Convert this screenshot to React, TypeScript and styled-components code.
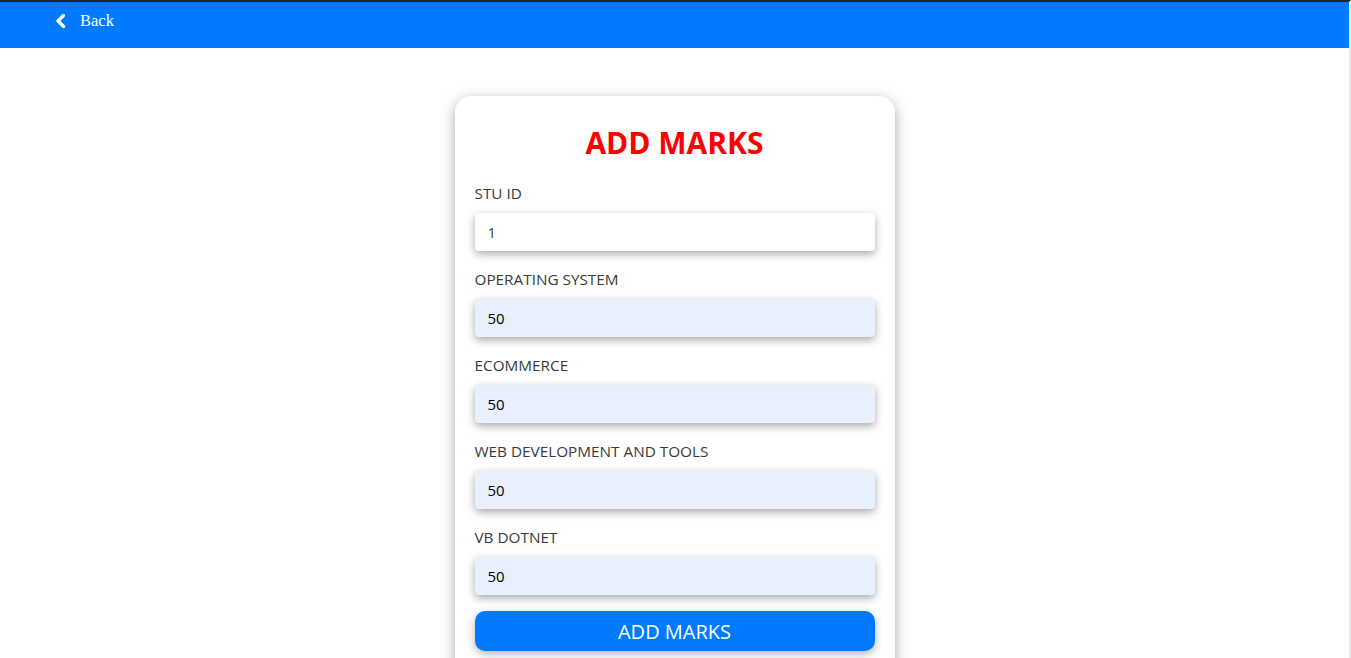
import React from "react";
import styled, { createGlobalStyle } from "styled-components";

const Global = createGlobalStyle`
  html, body { margin: 0; padding: 0; background: #fff; }
  body { font-family: "Open Sans", "Noto Sans", sans-serif; overflow: hidden; }
`;

const Page = styled.div`
  min-height: 658px;
  border-top: 2px solid #222;
  border-right: 2px solid #ececec;
  box-sizing: border-box;
`;

const Header = styled.header`
  height: 46px;
  background: #007bff;
  display: flex;
  align-items: center;
  padding-left: 55px;
`;

const BackLink = styled.a`
  display: flex;
  align-items: center;
  gap: 14px;
  color: #fff;
  font-family: "Liberation Serif", "Times New Roman", serif;
  font-size: 16.5px;
  text-decoration: none;
  margin-top: -9px;
`;

const Main = styled.main`
  display: flex;
  justify-content: center;
  padding-top: 48px;
`;

const Card = styled.form`
  width: 440px;
  box-sizing: border-box;
  background: #fff;
  border-radius: 16px;
  box-shadow: 0 4px 14px rgba(0, 0, 0, 0.35);
  padding: 27px 20px 30px;
  display: flex;
  flex-direction: column;
`;

const Title = styled.h1`
  margin: 0 0 20px;
  text-align: center;
  color: #f00;
  font-size: 30px;
  font-weight: 700;
  line-height: 40px;
`;

const Field = styled.div`
  display: flex;
  flex-direction: column;
  gap: 10px;
  margin-bottom: 18px;
`;

const Label = styled.label`
  font-size: 15.3px;
  font-weight: 400;
  color: #3a3a3a;
  line-height: 20px;
`;

const Input = styled.input<{ $filled?: boolean }>`
  height: 38px;
  box-sizing: border-box;
  border: none;
  border-radius: 4px;
  background: ${(p) => (p.$filled ? "#e8f0fe" : "#fff")};
  box-shadow: 0 3px 8px rgba(0, 0, 0, 0.35);
  padding: 0 13px;
  font-family: "Open Sans", "Noto Sans", sans-serif;
  font-size: 15px;
  color: ${(p) => (p.$filled ? "#000" : "#444")};
  outline: none;
`;

const Submit = styled.button`
  height: 40px;
  margin-top: -2px;
  border: none;
  border-radius: 10px;
  background: #007bff;
  color: #fff;
  font-family: "Open Sans", "Noto Sans", sans-serif;
  font-size: 20px;
  box-shadow: 0 3px 8px rgba(0, 0, 0, 0.3);
`;

const fields = [
  { label: "STU ID", value: "1", filled: false },
  { label: "OPERATING SYSTEM", value: "50", filled: true },
  { label: "ECOMMERCE", value: "50", filled: true },
  { label: "WEB DEVELOPMENT AND TOOLS", value: "50", filled: true },
  { label: "VB DOTNET", value: "50", filled: true },
];

export default function App() {
  return (
    <Page>
      <Global />
      <Header>
        <BackLink href="#">
          <svg width="11" height="14" viewBox="0 0 11 14">
            <path d="M8.5 1.5 L3 7 L8.5 12.5" fill="none" stroke="#fff" strokeWidth="3.2" strokeLinecap="round" strokeLinejoin="round" />
          </svg>
          Back
        </BackLink>
      </Header>
      <Main>
        <Card onSubmit={(e) => e.preventDefault()}>
          <Title>ADD MARKS</Title>
          {fields.map((f) => (
            <Field key={f.label}>
              <Label>{f.label}</Label>
              <Input $filled={f.filled} defaultValue={f.value} />
            </Field>
          ))}
          <Submit type="submit">ADD MARKS</Submit>
        </Card>
      </Main>
    </Page>
  );
}
